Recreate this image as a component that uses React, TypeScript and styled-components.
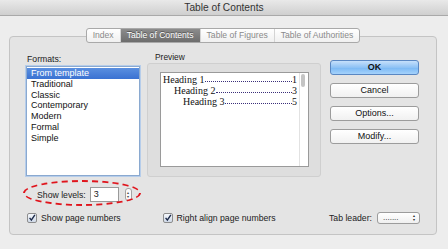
import React from "react";
import styled, { createGlobalStyle } from "styled-components";

const GlobalStyle = createGlobalStyle`
  html, body {
    margin: 0;
    padding: 0;
    background: #ededed;
  }
  body {
    font-family: "Liberation Sans", "Noto Sans", Arial, sans-serif;
    font-size: 8.7px;
    color: #222;
  }
`;

const formats = [
  "From template",
  "Traditional",
  "Classic",
  "Contemporary",
  "Modern",
  "Formal",
  "Simple",
];

const headings = [
  { label: "Heading 1", page: "1", indent: 0 },
  { label: "Heading 2", page: "3", indent: 11 },
  { label: "Heading 3", page: "5", indent: 20 },
];

function Checkbox() {
  return (
    <CheckBox>
      <svg width="10" height="10" viewBox="0 0 10 10">
        <path d="M2 4.8 L4.2 7.6 L8.6 1" stroke="#1d2a4a" strokeWidth="1.8" fill="none" />
      </svg>
    </CheckBox>
  );
}

function App() {
  return (
    <Window>
      <GlobalStyle />
      <TitleBar>Table of Contents</TitleBar>
      <Body>
        <Tabs>
          <Tab>Index</Tab>
          <Tab $active>Table of Contents</Tab>
          <Tab>Table of Figures</Tab>
          <Tab $last>Table of Authorities</Tab>
        </Tabs>
        <Panel>
          <MainRow>
            <FormatsCol>
              <Label>Formats:</Label>
              <ListBox>
                {formats.map((f, i) => (
                  <ListItem key={f} $selected={i === 0}>
                    {f}
                  </ListItem>
                ))}
              </ListBox>
            </FormatsCol>
            <PreviewCol>
              <GroupLabel>Preview</GroupLabel>
              <GroupBox>
                <PreviewBox>
                  <PreviewText>
                    {headings.map((h) => (
                      <TocLine key={h.label} style={{ paddingLeft: h.indent }}>
                        <span>{h.label}</span>
                        <Leader />
                        <span>{h.page}</span>
                      </TocLine>
                    ))}
                  </PreviewText>
                  <ScrollTrack>
                    <ScrollThumb />
                  </ScrollTrack>
                </PreviewBox>
              </GroupBox>
            </PreviewCol>
            <ButtonCol>
              <Button $primary>OK</Button>
              <Button>Cancel</Button>
              <Button>Options...</Button>
              <Button>Modify...</Button>
            </ButtonCol>
          </MainRow>
          <LevelsRow>
            <span>Show levels:</span>
            <NumberInput>3</NumberInput>
            <Stepper>
              <span>▴</span>
              <span>▾</span>
            </Stepper>
            <Highlight />
          </LevelsRow>
          <OptionsRow>
            <CheckItem $width={136}>
              <Checkbox />
              Show page numbers
            </CheckItem>
            <CheckItem $width={167}>
              <Checkbox />
              Right align page numbers
            </CheckItem>
            <LeaderField>
              Tab leader:
              <PopUp>
                <span>.......</span>
                <Arrows>
                  <span>▴</span>
                  <span>▾</span>
                </Arrows>
              </PopUp>
            </LeaderField>
          </OptionsRow>
        </Panel>
      </Body>
    </Window>
  );
}

export default App;

const Window = styled.div`
  width: 448px;
  height: 249px;
  background: #ededed;
  overflow: hidden;
`;

const TitleBar = styled.div`
  height: 15px;
  line-height: 15px;
  text-align: center;
  font-size: 10.2px;
  color: #333;
  background: linear-gradient(#e9e9e9, #cfcfcf);
  border-bottom: 1px solid #a9a9a9;
`;

const Body = styled.div`
  padding: 12px 11px 0 9px;
  display: flex;
  flex-direction: column;
`;

const Tabs = styled.div`
  align-self: center;
  display: flex;
  height: 13px;
  margin-left: 0;
  border: 1px solid #a9a9a9;
  border-radius: 3px;
  overflow: hidden;
  background: linear-gradient(#ffffff, #f0f0f0);
  position: relative;
  z-index: 1;
  margin-bottom: -7px;
`;

const Tab = styled.div<{ $active?: boolean; $last?: boolean }>`
  padding: 0 6px;
  line-height: 13px;
  font-size: 8.6px;
  white-space: nowrap;
  color: ${(p) => (p.$active ? "#fff" : "#8a8a8a")};
  background: ${(p) =>
    p.$active ? "linear-gradient(#8c8c8c, #6d6d6d)" : "transparent"};
  border-right: ${(p) => (p.$last ? "none" : "1px solid #d4d4d4")};
  text-shadow: ${(p) => (p.$active ? "0 -1px 0 #555" : "none")};
`;

const Panel = styled.div`
  height: 199px;
  box-sizing: border-box;
  background: #e4e4e4;
  border: 1px solid #c4c4c4;
  border-radius: 4px;
  padding: 17px 16px 0 16px;
  display: flex;
  flex-direction: column;
`;

const MainRow = styled.div`
  display: flex;
  align-items: flex-start;
`;

const FormatsCol = styled.div`
  width: 114px;
  display: flex;
  flex-direction: column;
`;

const Label = styled.div`
  height: 12px;
  line-height: 10px;
  padding-left: 1px;
`;

const ListBox = styled.div`
  height: 110px;
  box-sizing: border-box;
  background: #fff;
  border: 1px solid #8aa9d0;
  box-shadow: 0 0 0 1px #b6cdea;
  padding-top: 1px;
`;

const ListItem = styled.div<{ $selected?: boolean }>`
  height: 10.8px;
  line-height: 10.8px;
  padding-left: 4px;
  font-size: 9px;
  color: ${(p) => (p.$selected ? "#fff" : "#111")};
  background: ${(p) =>
    p.$selected ? "linear-gradient(#5a8fe0, #3a72d2)" : "transparent"};
`;

const PreviewCol = styled.div`
  margin-left: 7px;
  width: 174px;
  display: flex;
  flex-direction: column;
`;

const GroupLabel = styled.div`
  height: 9px;
  line-height: 7px;
  padding-left: 8px;
  font-size: 8.4px;
`;

const GroupBox = styled.div`
  height: 114px;
  box-sizing: border-box;
  border: 1px solid #cfcfcf;
  border-radius: 3px;
  background: #dedede;
  padding: 8px 11px 9px 12px;
`;

const PreviewBox = styled.div`
  height: 100%;
  box-sizing: border-box;
  background: #fff;
  border: 1px solid #9a9a9a;
  display: flex;
`;

const PreviewText = styled.div`
  flex: 1;
  padding: 1px 2px 0 2px;
  font-family: "Liberation Serif", "Times New Roman", serif;
  font-size: 10px;
  color: #111;
  min-width: 0;
`;

const TocLine = styled.div`
  display: flex;
  height: 11px;
  line-height: 11px;
  white-space: nowrap;
`;

const Leader = styled.span`
  flex: 1;
  align-self: flex-end;
  margin: 0 0 3px 1px;
  height: 0;
  border-bottom: 1px dotted #3a2f7a;
  min-width: 0;
`;

const ScrollTrack = styled.div`
  width: 7px;
  border-left: 1px solid #e2e2e2;
  padding: 1px 0 0 1px;
`;

const ScrollThumb = styled.div`
  width: 4px;
  height: 13px;
  border-radius: 2px;
  background: #c4c4c4;
`;

const ButtonCol = styled.div`
  margin-left: 9px;
  margin-top: 6px;
  display: flex;
  flex-direction: column;
  gap: 8px;
`;

const Button = styled.div<{ $primary?: boolean }>`
  width: 89px;
  height: 15px;
  box-sizing: border-box;
  line-height: 13px;
  text-align: center;
  border-radius: 3px;
  font-size: 9px;
  font-weight: ${(p) => (p.$primary ? 700 : 400)};
  border: 1px solid ${(p) => (p.$primary ? "#5a87c2" : "#9c9c9c")};
  background: ${(p) =>
    p.$primary
      ? "linear-gradient(#c6e0fb, #8ec2f5 50%, #7ab8f4 51%, #a5d2fb)"
      : "linear-gradient(#ffffff, #f1f1f1)"};
  color: #111;
`;

const LevelsRow = styled.div`
  position: relative;
  margin-top: 10px;
  height: 15px;
  display: flex;
  align-items: center;
  padding-left: 11px;
`;

const NumberInput = styled.div`
  margin-left: 4px;
  width: 29px;
  height: 15px;
  box-sizing: border-box;
  background: #fff;
  border: 1px solid #9a9a9a;
  line-height: 13px;
  padding-left: 3px;
  font-size: 9px;
`;

const Stepper = styled.div`
  margin-left: 6px;
  width: 7px;
  height: 13px;
  box-sizing: border-box;
  border: 1px solid #a3a3a3;
  border-radius: 3px;
  background: #fafafa;
  display: flex;
  flex-direction: column;
  align-items: center;
  justify-content: center;
  font-size: 4px;
  line-height: 4px;
  color: #444;
`;

const Highlight = styled.div`
  position: absolute;
  left: -3px;
  top: -7px;
  width: 118px;
  height: 26px;
  box-sizing: border-box;
  border: 2px dashed #e0141c;
  border-radius: 50%;
`;

const OptionsRow = styled.div`
  margin-top: 10px;
  display: flex;
  align-items: center;
  height: 12px;
  padding-left: 1px;
  white-space: nowrap;
`;

const CheckItem = styled.div<{ $width: number }>`
  width: ${(p) => p.$width}px;
  display: flex;
  align-items: center;
  gap: 4px;
`;

const CheckBox = styled.div`
  width: 10px;
  height: 10px;
  box-sizing: border-box;
  border: 1px solid #8d8d8d;
  border-radius: 2px;
  background: linear-gradient(#f5f8fc, #cfd9e8);
  display: flex;
  align-items: center;
  justify-content: center;
`;

const LeaderField = styled.div`
  display: flex;
  align-items: center;
  gap: 5px;
  margin-left: auto;
`;

const PopUp = styled.div`
  width: 43px;
  height: 12px;
  box-sizing: border-box;
  border: 1px solid #9c9c9c;
  border-radius: 3px;
  background: linear-gradient(#ffffff, #f0f0f0);
  display: flex;
  align-items: center;
  justify-content: space-between;
  padding: 0 4px 0 5px;
  font-size: 8px;
  line-height: 6px;
`;

const Arrows = styled.div`
  display: flex;
  flex-direction: column;
  font-size: 4px;
  line-height: 4px;
`;
